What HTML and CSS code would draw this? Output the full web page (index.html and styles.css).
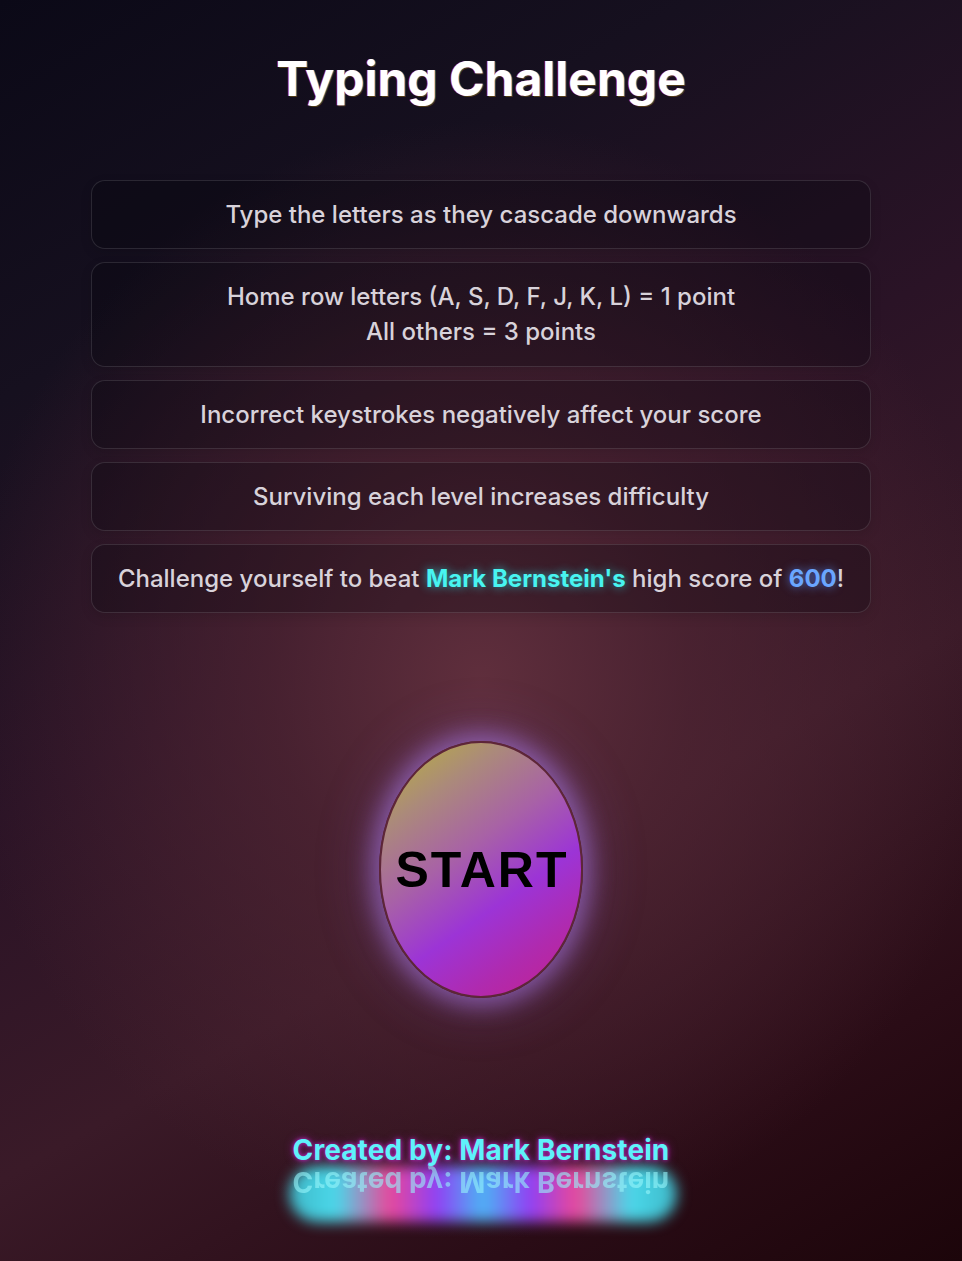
FILE: index.html
```html
<!DOCTYPE html>
<html lang="en">
<head>
<meta charset="utf-8">
<title>Typing Challenge</title>
<link rel="stylesheet" href="styles.css">
</head>
<body>
<main class="page">
  <h1 class="title">Typing Challenge</h1>
  <section class="rules">
    <div class="rule">Type the letters as they cascade downwards</div>
    <div class="rule">Home row letters (A, S, D, F, J, K, L) = 1 point<br>All others = 3 points</div>
    <div class="rule">Incorrect keystrokes negatively affect your score</div>
    <div class="rule">Surviving each level increases difficulty</div>
    <div class="rule">Challenge yourself to beat <span class="hl-name">Mark Bernstein's</span> high score of <span class="hl-score">600</span>!</div>
  </section>
  <button class="start" type="button">START</button>
  <footer class="credit">
    <div class="credit-wrap">
      <div class="credit-glow"></div>
      <p class="credit-text">Created by: Mark Bernstein</p>
      <p class="credit-reflect" aria-hidden="true">Created by: Mark Bernstein</p>
    </div>
  </footer>
</main>
</body>
</html>
```

FILE: styles.css
```css
html, body {
  margin: 0;
  padding: 0;
}
body {
  min-height: 1261px;
  font-family: Inter, "Noto Sans", sans-serif;
  background:
    radial-gradient(ellipse 520px 560px at 50% 54%, rgba(98, 48, 62, 0.95) 0%, rgba(82, 38, 52, 0.7) 40%, rgba(60, 24, 40, 0) 100%),
    linear-gradient(150deg, #0b0917 0%, #16101f 22%, #2a1326 45%, #3a1a28 65%, #2a0c16 85%, #1c050a 100%);
  color: #d6d0d8;
}
.page {
  width: 780px;
  margin: 0 auto;
  padding-top: 50px;
  display: flex;
  flex-direction: column;
  align-items: center;
}
.title {
  margin: 0;
  font-size: 48px;
  line-height: 58px;
  font-weight: 700;
  color: #ffffff;
  text-shadow: -1px 0 rgba(255, 20, 60, 0.6), 1px 0 rgba(0, 150, 255, 0.5), 1px 1px rgba(255, 190, 0, 0.25);
}
.rules {
  margin-top: 72px;
  width: 100%;
  display: flex;
  flex-direction: column;
  gap: 13px;
}
.rule {
  padding: 16px 20px;
  border: 1px solid rgba(255, 255, 255, 0.12);
  border-radius: 14px;
  background: rgba(5, 2, 10, 0.28);
  text-align: center;
  font-size: 24px;
  line-height: 35.2px;
  font-weight: 500;
  color: #d8d2da;
  box-shadow: 0 4px 12px rgba(0, 0, 0, 0.12);
}
.hl-name {
  color: #48f4f0;
  font-weight: 700;
  text-shadow: 0 0 10px rgba(40, 230, 240, 0.7);
}
.hl-score {
  color: #6aa6ff;
  font-weight: 700;
  text-shadow: 0 0 10px rgba(90, 150, 255, 0.75);
}
.start {
  margin-top: 128px;
  width: 204px;
  height: 257px;
  border: 2px solid #5e2638;
  border-radius: 50%;
  background: linear-gradient(145deg, #b9b636 0%, #ab8a7a 22%, #a862a6 42%, #9c34d6 62%, #b02aae 80%, #c6208c 100%);
  box-shadow: 0 0 22px 8px rgba(168, 120, 230, 0.55), 0 0 50px 14px rgba(140, 90, 200, 0.25);
  font-family: "Liberation Sans", Arial, sans-serif;
  font-size: 50px;
  font-weight: 700;
  color: #000;
  letter-spacing: 2px;
  padding: 0 0 0 2px;
  cursor: pointer;
}
.credit {
  margin-top: 135px;
  display: flex;
  justify-content: center;
}
.credit-wrap {
  position: relative;
}
.credit-text,
.credit-reflect {
  margin: 0;
  font-size: 28px;
  line-height: 34px;
  font-weight: 700;
  letter-spacing: 0.1px;
  white-space: nowrap;
  position: relative;
}
.credit-text {
  color: #5ef2fa;
  text-shadow: 0 0 4px rgba(210, 40, 220, 0.9), 0 0 10px rgba(200, 40, 220, 0.5);
}
.credit-reflect {
  transform: scaleY(-1);
  color: rgba(150, 245, 250, 0.6);
  margin-top: -2px;
}
.credit-glow {
  position: absolute;
  left: -4px;
  right: -8px;
  top: 33px;
  height: 56px;
  border-radius: 28px;
  background: linear-gradient(90deg, #3fb8c8 0%, #4ad8ea 12%, #e8489a 26%, #9040f4 38%, #4cb4f4 50%, #9040f4 62%, #e8489a 74%, #4ad8ea 88%, #3fb8c8 100%);
  filter: blur(7px);
}
```
